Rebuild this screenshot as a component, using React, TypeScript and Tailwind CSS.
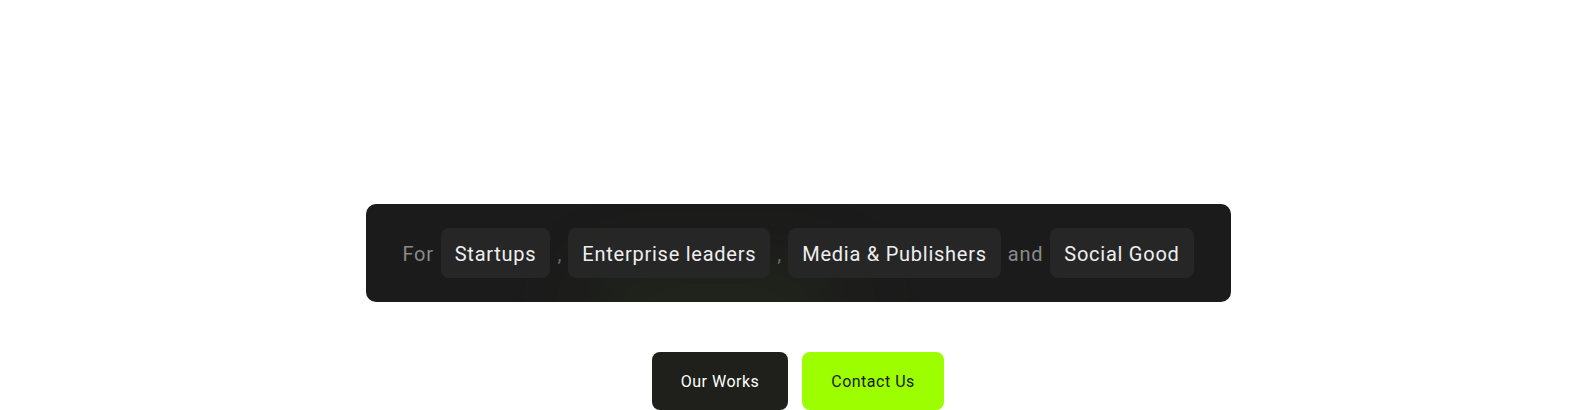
import React from 'react';

const audiences = ['Startups', 'Enterprise leaders', 'Media & Publishers', 'Social Good'];

function Chip({ label }: { label: string }) {
  return (
    <span className="flex h-[50px] items-center rounded-[8px] bg-[#262626] px-[14px] pt-[2px] text-[20px] tracking-[0.75px] text-[#efefef]">
      {label}
    </span>
  );
}

export default function App() {
  return (
    <main
      className="min-h-[410px] bg-white pt-[204px]"
      style={{ fontFamily: 'Roboto, "Liberation Sans", sans-serif' }}
    >
      {/* Audience bar */}
      <div className="relative mx-auto flex h-[98px] w-[865px] items-center justify-center gap-[7px] overflow-hidden rounded-[10px] bg-[#1b1b1b]">
        <div className="pointer-events-none absolute bottom-[-30px] left-[230px] h-[50px] w-[240px] rounded-full bg-[#2f3a1c] opacity-60 blur-2xl" />
        <span className="relative pt-[2px] text-[20px] tracking-[0.75px] text-[#8a8a8a]">For</span>
        <span className="relative"><Chip label={audiences[0]} /></span>
        <span className="relative pt-[2px] text-[20px] text-[#6a6a6a]">,</span>
        <span className="relative"><Chip label={audiences[1]} /></span>
        <span className="relative pt-[2px] text-[20px] text-[#6a6a6a]">,</span>
        <span className="relative"><Chip label={audiences[2]} /></span>
        <span className="relative pt-[2px] text-[20px] tracking-[0.75px] text-[#8a8a8a]">and</span>
        <span className="relative"><Chip label={audiences[3]} /></span>
      </div>

      {/* Actions */}
      <div className="mt-[50px] flex justify-center gap-[14px]">
        <button className="h-[58px] w-[136px] rounded-[8px] bg-[#1f1f1c] pt-[2px] text-[16px] tracking-[0.5px] text-white">
          Our Works
        </button>
        <button className="h-[58px] w-[142px] rounded-[8px] bg-[#9dfe00] pt-[2px] text-[16px] tracking-[0.5px] text-[#1a1a1a]">
          Contact Us
        </button>
      </div>
    </main>
  );
}
